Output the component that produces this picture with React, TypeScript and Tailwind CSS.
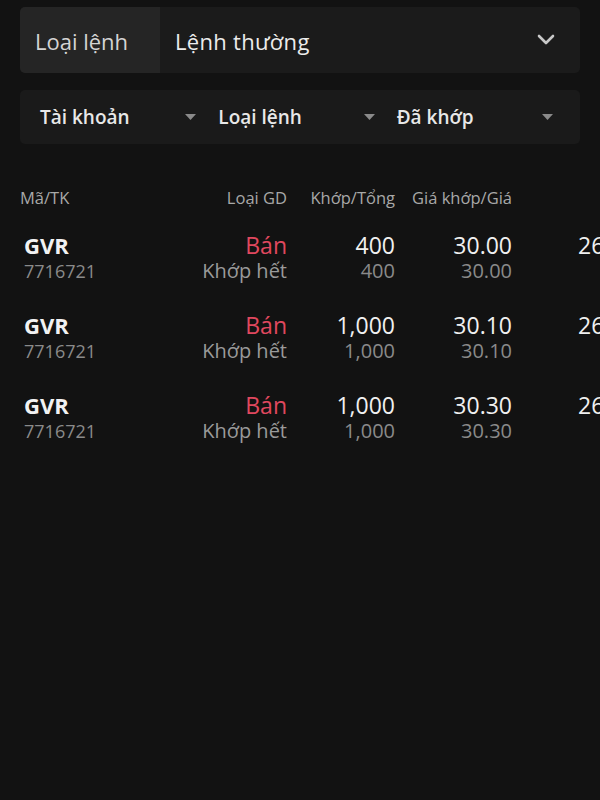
import React from "react";

const rows = [
  { code: "GVR", acc: "7716721", side: "Bán", status: "Khớp hết", qty: "400", qty2: "400", price: "30.00", price2: "30.00" },
  { code: "GVR", acc: "7716721", side: "Bán", status: "Khớp hết", qty: "1,000", qty2: "1,000", price: "30.10", price2: "30.10" },
  { code: "GVR", acc: "7716721", side: "Bán", status: "Khớp hết", qty: "1,000", qty2: "1,000", price: "30.30", price2: "30.30" },
];

function Tri() {
  return (
    <svg width="11" height="7" viewBox="0 0 11 7">
      <path d="M0 0 L11 0 L5.5 6 Z" fill="#8a8a8a" />
    </svg>
  );
}

export default function App() {
  return (
    <div
      className="w-[600px] h-[800px] overflow-hidden bg-[#121212] text-[#e6e6e6]"
      style={{ fontFamily: "'Open Sans', 'Noto Sans', sans-serif" }}
    >
      <div className="pt-[7px] px-5">
        <div className="flex h-[66px] rounded-[5px] bg-[#1b1b1b] overflow-hidden">
          <div className="w-[140px] bg-[#252525] flex items-center pl-[15px] pt-[3px] text-[22px] text-[#d4d4d4]">
            Loại lệnh
          </div>
          <div className="flex-1 flex items-center justify-between pl-[15px] pr-[24px] text-[22px] text-[#ececec]">
            <span className="pt-[3px] tracking-[0.3px]">Lệnh thường</span>
            <svg width="20" height="12" viewBox="0 0 20 12">
              <path d="M3 2 L10 9 L17 2" stroke="#c8c8c8" strokeWidth="2.6" fill="none" strokeLinecap="round" strokeLinejoin="round" />
            </svg>
          </div>
        </div>
        <div className="mt-[17px] h-[54px] rounded-[5px] bg-[#1a1a1a] grid grid-cols-3 gap-[22px] pl-5 pr-[27px] items-center">
          {["Tài khoản", "Loại lệnh", "Đã khớp"].map((t) => (
            <div key={t} className="flex items-center justify-between">
              <span className="text-[19px] font-semibold text-[#e8e8e8] pt-[1px]">{t}</span>
              <Tri />
            </div>
          ))}
        </div>
      </div>

      <div className="mt-[43px] pl-5 flex text-[16.5px] leading-[22px] text-[#a8a8a8] whitespace-nowrap">
        <div className="w-[140px] shrink-0">Mã/TK</div>
        <div className="w-[127px] shrink-0 text-right">Loại GD</div>
        <div className="w-[108px] shrink-0 text-right">Khớp/Tổng</div>
        <div className="w-[117px] shrink-0 text-right">Giá khớp/Giá</div>
      </div>

      <div className="mt-[22px] flex flex-col gap-[28px]">
        {rows.map((r, i) => (
          <div key={i} className="pl-5 flex whitespace-nowrap">
            <div className="w-[140px] shrink-0 pl-1">
              <div className="text-[22px] leading-[28px] font-bold text-[#f2f2f2]">{r.code}</div>
              <div className="text-[18px] leading-[24px] text-[#8a8a8a]">{r.acc}</div>
            </div>
            <div className="w-[127px] shrink-0 text-right">
              <div className="text-[23px] leading-[28px] text-[#e0485f]">{r.side}</div>
              <div className="text-[20px] leading-[24px] text-[#9a9a9a]">{r.status}</div>
            </div>
            <div className="w-[108px] shrink-0 text-right">
              <div className="text-[23px] leading-[28px] text-[#f0f0f0]">{r.qty}</div>
              <div className="text-[20px] leading-[24px] text-[#8a8a8a]">{r.qty2}</div>
            </div>
            <div className="w-[117px] shrink-0 text-right">
              <div className="text-[23px] leading-[28px] text-[#f0f0f0]">{r.price}</div>
              <div className="text-[20px] leading-[24px] text-[#8a8a8a]">{r.price2}</div>
            </div>
            <div className="pl-[66px] shrink-0">
              <div className="text-[23px] leading-[28px] text-[#f0f0f0]">26/06/2024</div>
            </div>
          </div>
        ))}
      </div>
    </div>
  );
}
